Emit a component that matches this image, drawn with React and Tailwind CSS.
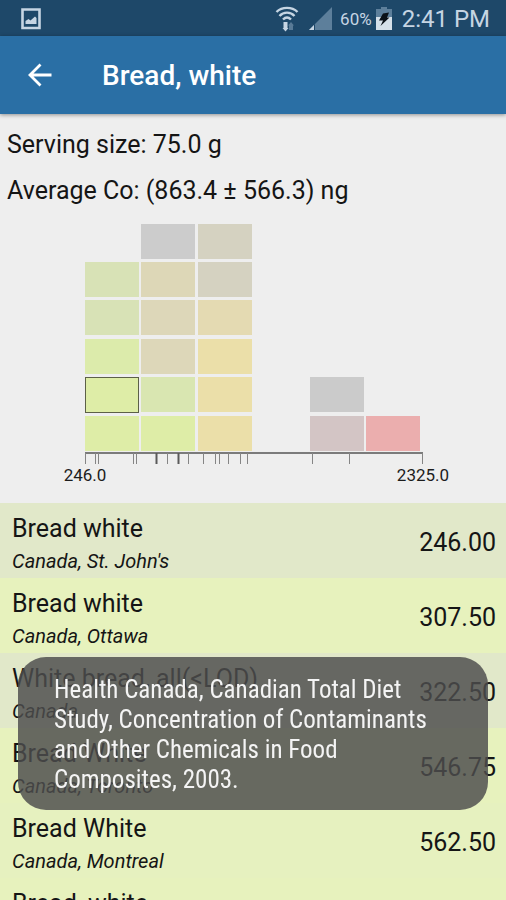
import React, { useState } from 'react';

const source =
    'Health Canada, Canadian Total Diet Study, Concentration of Contaminants and Other Chemicals in Food Composites, 2003.';

const samples = [
    { name: 'Bread white', place: "Canada, St. John's", value: '246.00', color: 'bg-[#e1e8c9]' },
    { name: 'Bread white', place: 'Canada, Ottawa', value: '307.50', color: 'bg-[#e7f2bd]' },
    { name: 'White bread, all(<LOD)', place: 'Canada', value: '322.50', color: 'bg-[#e1e8c9]' },
    { name: 'Bread White', place: 'Canada, Toronto', value: '546.75', color: 'bg-[#e7f2bd]' },
    { name: 'Bread White', place: 'Canada, Montreal', value: '562.50', color: 'bg-[#e6f1bf]' },
    { name: 'Bread, white', place: 'Canada, Vancouver', value: '577.50', color: 'bg-[#e7f2bd]' },
];

// Histogram columns, cells listed from the axis up
const columns = [
    { x: 22, cells: ['#deeda7', '#deeda7', '#dcebab', '#d8e2b6', '#d8e2b6'] },
    { x: 78, cells: ['#deeda7', '#d9e6b1', '#ddd7b9', '#ddd7b9', '#ddd7b7', '#cccccc'] },
    { x: 135, cells: ['#ebdfa9', '#ebdfa9', '#ebdfa9', '#e4dab2', '#d5d2c1', '#d5d2c1'] },
    { x: 247, cells: ['#d3c5c5', '#cbcbcb'] },
    { x: 303, cells: ['#ebaeae'] },
];
const rowTops = [203, 164, 126, 87, 49, 11];

const ticks = [22, 32, 35, 70, 73, 104, 125, 140, 152, 156, 165, 177, 184, 249, 286, 359];
const heavyTicks = [93, 115];

function StatusBar() {
    return (
        <div className="flex h-9 shrink-0 items-center bg-[#1e4869] pl-5 pr-4 pt-0.5 text-[#c6d5e3]">
            <svg className="h-6 w-[22px]" viewBox="0 0 22 24" role="img" aria-label="Screenshot saved">
                <path d="M2.500 2.500h17v18.500h-17z" fill="none" stroke="currentColor" strokeWidth="2.600" />
                <path d="M5.500 17v-3l3-2 2 1.500 4.500-4 1.500 1.500V17z" fill="currentColor" />
            </svg>
            <div className="ml-auto flex items-center">
                <svg className="h-[26px] w-6" viewBox="0 0 24 26" fill="none" stroke="currentColor" strokeWidth="2.400" role="img" aria-label="Wi-Fi">
                    <path d="M1.500 6C7 .5 17 .5 22.500 6M4.500 10c4-4.500 11-4.500 15 0M8 13.500c2.500-2.500 5.500-2.500 8 0" />
                    <path d="M8.500 16h4v6h1L10.500 25.500 7.500 22h1z" fill="currentColor" stroke="none" />
                    <path d="M14 24v-4.500h-1l3-3.500 3 3.500h-1V24z" fill="#587a96" stroke="none" />
                </svg>
                <svg className="ml-2.5 h-6 w-[23px]" viewBox="0 0 23 24" role="img" aria-label="Mobile signal">
                    <path d="M23 0v23H0z" fill="#5d7f9b" />
                    <path d="M5 18v5H0z" fill="currentColor" />
                    <path d="M5 17.500h1V23H5z" fill="#1e4869" />
                </svg>
                <span className="ml-2 text-[17px] leading-6">60%</span>
                <svg className="ml-1 h-6 w-4" viewBox="0 0 16 24" role="img" aria-label="Battery charging">
                    <path d="M5 0h6v2h5v8H0V2h5z" fill="#5d7f9b" />
                    <path d="M0 10h16v13H0z" fill="#d5e0e9" />
                    <path d="M7 6.500l6-1-2 5h2.500L4.500 19 7 13.500H3z" fill="#0a1118" />
                </svg>
                <span className="ml-2.5 text-2xl leading-8">2:41 PM</span>
            </div>
        </div>
    );
}

function Histogram() {
    return (
        <svg className="mx-auto h-[290px] w-[380px] overflow-visible" viewBox="0 0 380 290" role="img" aria-label="Distribution of Co values from 246.0 to 2325.0">
            {columns.map((column) =>
                column.cells.map((fill, i) => (
                    <rect key={`${column.x}-${i}`} x={column.x} y={rowTops[i]} width="54" height="35" fill={fill} />
                ))
            )}
            {/* Selected sample */}
            <rect x="22.500" y="164.500" width="53" height="35" fill="none" stroke="#5c6047" />
            <path d="M22 240h338" stroke="#555555" strokeWidth="1.500" />
            {ticks.map((x) => (
                <path key={x} d={`M${x + 0.5} 240v11`} stroke="#858585" />
            ))}
            {heavyTicks.map((x) => (
                <path key={x} d={`M${x + 0.5} 240v11`} stroke="#5a5a5a" strokeWidth="2" />
            ))}
            <text x="22" y="268" textAnchor="middle" fontSize="17" fill="#1c1c1c">246.0</text>
            <text x="360" y="268" textAnchor="middle" fontSize="17" fill="#1c1c1c">2325.0</text>
        </svg>
    );
}

export default function App() {
    const [toastOpen, setToastOpen] = useState(true);

    return (
        <div className="relative flex h-screen flex-col overflow-hidden bg-[#eeeeee] font-[Roboto,sans-serif] text-[#151515]">
            <StatusBar />

            <header className="z-10 flex h-[78px] shrink-0 items-center bg-[#2a6fa5] px-6 pt-0.5 text-white shadow-[0_1px_4px_rgba(0,0,0,0.4)]">
                <button type="button" aria-label="Back" className="flex size-8 items-center justify-center">
                    <svg className="size-8" viewBox="0 0 32 32" fill="none" stroke="currentColor" strokeWidth="2.800">
                        <path d="M27.500 15H6M16.500 4.500L6 15l10.500 10.500" />
                    </svg>
                </button>
                <h1 className="ml-[46px] text-[28px] leading-9 font-medium">Bread, white</h1>
            </header>

            <section className="shrink-0 px-[7px] pt-2 text-[25px] leading-[46px]">
                <p>Serving size: 75.0 g</p>
                <p>Average Co: (863.4 ± 566.3) ng</p>
            </section>

            <div className="-mt-px shrink-0">
                <Histogram />
            </div>

            <ul className="min-h-0 flex-1 overflow-y-auto [scrollbar-width:none]">
                {samples.map((sample, i) => (
                    <li key={i}>
                        <button
                            type="button"
                            onClick={() => setToastOpen(!toastOpen)}
                            className={`flex h-[75px] w-full items-center justify-between pt-1 pl-3 pr-2.5 text-left ${sample.color}`}
                        >
                            <span className="flex flex-col">
                                <span className="text-[25px] leading-9">{sample.name}</span>
                                <span className="text-[20px] leading-7 italic">{sample.place}</span>
                            </span>
                            <span className="text-[25px] leading-9">{sample.value}</span>
                        </button>
                    </li>
                ))}
            </ul>

            {/* Toast with the data source */}
            {toastOpen && (
                <div
                    role="status"
                    className="absolute inset-x-[18px] bottom-[90px] z-20 rounded-[28px] bg-[#4d4d4d]/83 px-9 pt-[18px] pb-[15px] font-['Roboto_Condensed',Roboto,sans-serif] text-[25px] leading-[30px] text-[#f4f4f4]"
                >
                    <p className="max-w-[390px]">{source}</p>
                </div>
            )}
        </div>
    );
}
